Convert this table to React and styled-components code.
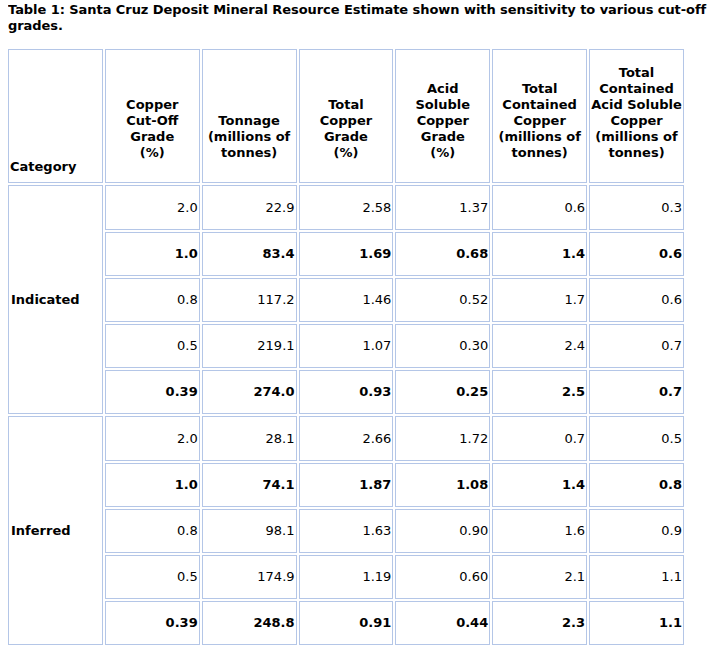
import React from 'react';
import styled, { createGlobalStyle } from 'styled-components';

const GlobalStyle = createGlobalStyle`
  body {
    margin: 0 8px;
    background: #fff;
    color: #000;
    font-family: "DejaVu Sans", Verdana, sans-serif;
    font-size: 13px;
    line-height: 16px;
  }
`;

const Caption = styled.p`
  margin: 2px 0 13px;
  font-weight: bold;
  letter-spacing: -0.06px;
`;

const Table = styled.table`
  border-collapse: separate;
  border-spacing: 2px;
  margin: 0 -2px;
  table-layout: fixed;
  width: 680px;
`;

const HeadCell = styled.th`
  border: 1px solid #b4c6e7;
  padding: 1px 1px ${(p) => (p.$label ? '7px' : '21px')};
  height: 134px;
  box-sizing: border-box;
  vertical-align: bottom;
  text-align: ${(p) => (p.$label ? 'left' : 'center')};
  white-space: nowrap;
  font-weight: bold;
`;

const Row = styled.tr`
  height: ${(p) => p.$h}px;
  font-weight: ${(p) => (p.$strong ? 'bold' : 'normal')};
`;

const Cell = styled.td`
  border: 1px solid #b4c6e7;
  padding: 1px;
  text-align: right;
  vertical-align: middle;
`;

const GroupCell = styled.td`
  border: 1px solid #b4c6e7;
  padding: 1px 2px;
  text-align: left;
  vertical-align: middle;
  font-weight: bold;
`;

const headers = [
  ['Copper', 'Cut-Off', 'Grade', '(%)'],
  ['Tonnage', '(millions of', 'tonnes)'],
  ['Total', 'Copper', 'Grade', '(%)'],
  ['Acid', 'Soluble', 'Copper', 'Grade', '(%)'],
  ['Total', 'Contained', 'Copper', '(millions of', 'tonnes)'],
  ['Total', 'Contained', 'Acid Soluble', 'Copper', '(millions of', 'tonnes)'],
];

const groups = [
  {
    name: 'Indicated',
    rows: [
      { v: ['2.0', '22.9', '2.58', '1.37', '0.6', '0.3'] },
      { v: ['1.0', '83.4', '1.69', '0.68', '1.4', '0.6'], bold: true },
      { v: ['0.8', '117.2', '1.46', '0.52', '1.7', '0.6'] },
      { v: ['0.5', '219.1', '1.07', '0.30', '2.4', '0.7'] },
      { v: ['0.39', '274.0', '0.93', '0.25', '2.5', '0.7'], bold: true },
    ],
  },
  {
    name: 'Inferred',
    rows: [
      { v: ['2.0', '28.1', '2.66', '1.72', '0.7', '0.5'] },
      { v: ['1.0', '74.1', '1.87', '1.08', '1.4', '0.8'], bold: true },
      { v: ['0.8', '98.1', '1.63', '0.90', '1.6', '0.9'] },
      { v: ['0.5', '174.9', '1.19', '0.60', '2.1', '1.1'] },
      { v: ['0.39', '248.8', '0.91', '0.44', '2.3', '1.1'], bold: true },
    ],
  },
];

const rowHeights = [45, 44, 44, 44, 44];

const App = () => (
  <>
    <GlobalStyle />
    <Caption>
      Table 1: Santa Cruz Deposit Mineral Resource Estimate shown with sensitivity to various cut-off grades.
    </Caption>
    <Table>
      <thead>
        <tr>
          <HeadCell $label>Category</HeadCell>
          {headers.map((lines, i) => (
            <HeadCell key={i}>
              {lines.map((l, j) => (
                <React.Fragment key={j}>
                  {j > 0 && <br />}
                  {l}
                </React.Fragment>
              ))}
            </HeadCell>
          ))}
        </tr>
      </thead>
      <tbody>
        {groups.map((g) =>
          g.rows.map((r, i) => (
            <Row key={g.name + i} $strong={r.bold} $h={rowHeights[i]}>
              {i === 0 && <GroupCell rowSpan={5}>{g.name}</GroupCell>}
              {r.v.map((val, k) => (
                <Cell key={k}>{val}</Cell>
              ))}
            </Row>
          ))
        )}
      </tbody>
    </Table>
  </>
);

export default App;
